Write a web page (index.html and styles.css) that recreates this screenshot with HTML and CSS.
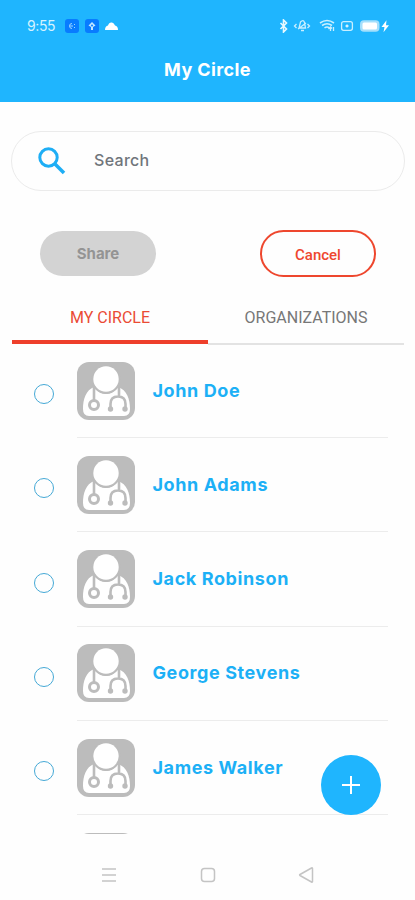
FILE: index.html
```html
<!DOCTYPE html>
<html lang="en">
<head>
  <meta charset="UTF-8" />
  <meta name="viewport" content="width=device-width, initial-scale=1.0" />
  <title>My Circle</title>
  <link rel="stylesheet" href="styles.css">
</head>
<body>
  <!-- shared doctor avatar -->
  <svg class="defs" width="0" height="0">
    <symbol id="doctor" viewBox="0 0 58 58">
      <rect width="58" height="58" rx="12" fill="#bcbcbc"/>
      <path d="M17 25C9 28 6 37 6 47q0 7 6 7h35q6 0 6-7c0-10-3-19-12-22q-5 7-12 7t-12-7z" fill="#fff"/>
      <circle cx="29" cy="17.500" r="14.500" fill="#bcbcbc"/>
      <circle cx="29" cy="17" r="12.700" fill="#fff"/>
      <g fill="none" stroke="#bcbcbc" stroke-width="2.600">
        <path d="M17 24v14M42 24v10M33.500 46v-4q0-7.500 7.500-7.500t7.500 7.500v4"/>
        <circle cx="17" cy="43" r="4.500" stroke-width="3"/>
      </g>
      <circle cx="33.500" cy="47" r="2.700" fill="#bcbcbc"/>
      <circle cx="48" cy="47" r="2.700" fill="#bcbcbc"/>
    </symbol>
  </svg>

  <header class="header">
    <div class="status">
      <div class="status-left">
        <span class="time">9:55</span>
        <svg class="app" viewBox="0 0 14 14"><rect width="14" height="14" rx="3" fill="#087cff"/><path d="M7 4.500a2.500 2.500 0 1 0 0 5M5 7h3M9.500 5v1M9.500 8v1" stroke="#9bd5ff" fill="none"/></svg>
        <svg class="app" viewBox="0 0 14 14"><rect width="14" height="14" rx="3" fill="#087cff"/><path d="M7 3l3.500 3.500L8 8v3H6V8L3.500 6.500z" fill="#c3e7ff"/><circle cx="7" cy="6.500" r="1" fill="#087cff"/></svg>
        <svg class="cloud" viewBox="0 0 13 8"><path d="M0 8Q0 4 3 3.500Q4 0 7 .5Q9 1 10 3.500Q13 4 13 8z" fill="#fff"/></svg>
      </div>
      <svg class="status-right" viewBox="0 0 112 14" fill="none" stroke="#c9efff" stroke-width="1.300">
        <path d="M2.500 4l6 6L5.500 13V1l3 3-6 6" stroke="#e8f9ff" stroke-width="1.600"/>
        <path d="M22.500 3q3-3 4 .5l1 5.500h-6.500zM20 10l8-6M23 11.500h3M18.500 5l-2 2 2 2M29.500 5l2 2-2 2"/>
        <path d="M42 4q7-5 14 0M44 6.500q5-3.500 10 0M46.500 9q2.500-2 5 0" stroke-width="1.600"/>
        <path d="M52.500 12V8m-2 2 2-2 1.500 1.500M55.500 8v4"/>
        <rect x="63.600" y="2.700" width="10.800" height="8.600" rx="2"/>
        <path d="M67.500 7h3M69 5.500v3" stroke="#e8f9ff"/>
        <rect x="82" y="1.200" width="19.500" height="11.600" rx="4" fill="#a5dffb" stroke="none"/>
        <rect x="84.500" y="3.600" width="14.500" height="6.800" rx="1.500" fill="#fff" stroke="none"/>
        <path d="M108.500 1.200L103.500 8h3l-1 5.200 5.500-7H108z" fill="#fff" stroke="none"/>
      </svg>
    </div>
    <h1>My Circle</h1>
  </header>

  <main>
    <div class="search">
      <svg viewBox="0 0 28 28" fill="none" stroke="#1eaef5"><circle cx="10.500" cy="10.500" r="8.700" stroke-width="3"/><path d="M16.500 16.500L26 26" stroke-width="3.600"/></svg>
      <span>Search</span>
    </div>

    <div class="actions">
      <button class="btn share">Share</button>
      <button class="btn cancel">Cancel</button>
    </div>

    <nav class="tabs">
      <div class="tab active"><span>MY CIRCLE</span></div>
      <div class="tab"><span>ORGANIZATIONS</span></div>
    </nav>

    <ul class="list">
      <li><i class="radio"></i><svg class="avatar"><use href="#doctor"/></svg><span class="name">John Doe</span></li>
      <li><i class="radio"></i><svg class="avatar"><use href="#doctor"/></svg><span class="name">John Adams</span></li>
      <li><i class="radio"></i><svg class="avatar"><use href="#doctor"/></svg><span class="name">Jack Robinson</span></li>
      <li><i class="radio"></i><svg class="avatar"><use href="#doctor"/></svg><span class="name">George Stevens</span></li>
      <li><i class="radio"></i><svg class="avatar"><use href="#doctor"/></svg><span class="name">James Walker</span></li>
      <li><i class="radio"></i><svg class="avatar"><use href="#doctor"/></svg></li>
    </ul>
  </main>

  <button class="fab" aria-label="Add"><svg viewBox="0 0 18 18"><path d="M9 0v18M0 9h18" stroke="#fff" stroke-width="2"/></svg></button>

  <footer class="navbar">
    <svg viewBox="0 0 16 16"><path d="M1 2h14M1 8h14M1 14h14"/></svg>
    <svg viewBox="0 0 16 16"><rect x="1.500" y="1.500" width="13" height="13" rx="3"/></svg>
    <svg viewBox="0 0 16 16"><path d="M14.500 1.500v13q0 1-1 .5L2 8.500q-.8-.5 0-1L13.500 1q1-.5 1 .5z"/></svg>
  </footer>
</body>
</html>
```
FILE: styles.css
```css
* {
  box-sizing: border-box;
}
body {
  display: flex;
  flex-direction: column;
  height: 900px;
  margin: 0;
  background-color: #fefefe;
  font-family: Inter, sans-serif;
  overflow: hidden;
}
.defs {
  position: absolute;
}
.header {
  height: 102px;
  background-color: #1fb5fe;
  color: white;
  flex-shrink: 0;
}
.status {
  display: flex;
  justify-content: space-between;
  align-items: center;
  height: 52px;
  padding: 0 25px 0 27px;
}
.status-left {
  display: flex;
  align-items: center;
}
.time {
  width: 38px;
  padding-bottom: 1px;
  font-size: 14px;
  color: #d5f2ff;
  letter-spacing: -0.4px;
}
.app {
  width: 14px;
  height: 14px;
  margin-right: 6px;
}
.cloud {
  width: 13px;
  height: 8px;
}
.status-right {
  width: 112px;
  height: 14px;
}
h1 {
  margin: 6px 0 0;
  font-size: 18px;
  line-height: 24px;
  text-align: center;
  letter-spacing: 0.4px;
}
main {
  display: flex;
  flex-direction: column;
  height: 732px;
  flex-shrink: 0;
  overflow: hidden;
}
.search {
  display: flex;
  align-items: center;
  flex-shrink: 0;
  height: 60px;
  margin: 29px 10px 0 11px;
  padding-left: 26px;
  border: 1px solid #ebebeb;
  border-radius: 30px;
  color: #70757b;
  font-size: 16px;
  font-weight: 500;
  letter-spacing: 0.3px;
}
.search svg {
  width: 28px;
  height: 28px;
  margin-right: 28px;
}
.search span {
  padding-bottom: 3px;
}
.actions {
  display: flex;
  justify-content: space-between;
  padding: 39px 39px 0 40px;
}
.btn {
  width: 116px;
  height: 47px;
  padding: 0;
  border: none;
  border-radius: 24px;
}
.share {
  height: 45px;
  margin-top: 1px;
  background-color: #d3d3d3;
  color: #949494;
  font: bold 15px Inter, sans-serif;
}
.cancel {
  border: 2px solid #ee472e;
  background-color: transparent;
  color: #ee472e;
  font: 500 15px Roboto, sans-serif;
  padding-top: 2px;
}
.tabs {
  display: flex;
  flex-shrink: 0;
  height: 68px;
  margin: 0 11px 0 12px;
  font-family: Roboto, sans-serif;
  font-size: 16px;
}
.tab {
  display: flex;
  align-items: center;
  justify-content: center;
  width: 50%;
  height: 68px;
  padding-top: 14px;
  border-bottom: 2px solid #e3e3e3;
  color: #777;
}
.tab.active {
  height: 67px;
  padding-top: 17px;
  border-bottom: 4px solid #ee3f2b;
  color: #ea4b35;
}
.list {
  margin: 0;
  padding: 0;
  list-style: none;
}
.list li {
  display: flex;
  align-items: flex-start;
  height: 94.3px;
  padding: 16.500px 27px 0 34px;
  background: linear-gradient(#ececec, #ececec) no-repeat 77px 92px / 311px 1px;
}
.radio {
  width: 20px;
  height: 20px;
  margin: 22.500px 22.500px 0 0;
  border: 1px solid #45a9d6;
  border-radius: 50%;
}
.avatar {
  width: 58px;
  height: 58px;
}
.name {
  margin: 16px 0 0 18px;
  color: #1cb0f6;
  font-size: 18px;
  font-weight: bold;
  line-height: 25px;
  letter-spacing: 0.6px;
  white-space: nowrap;
}
.fab {
  display: flex;
  align-items: center;
  justify-content: center;
  position: absolute;
  left: 321px;
  top: 755px;
  width: 60px;
  height: 60px;
  padding: 0;
  border: none;
  border-radius: 50%;
  background-color: #1fb5fe;
}
.fab svg {
  width: 18px;
  height: 18px;
}
.navbar {
  display: flex;
  justify-content: space-between;
  align-items: center;
  height: 66px;
  padding: 16px 101px 0;
}
.navbar svg {
  width: 16px;
  height: 16px;
  fill: none;
  stroke: #c4c4c4;
  stroke-width: 1.500;
}
```
